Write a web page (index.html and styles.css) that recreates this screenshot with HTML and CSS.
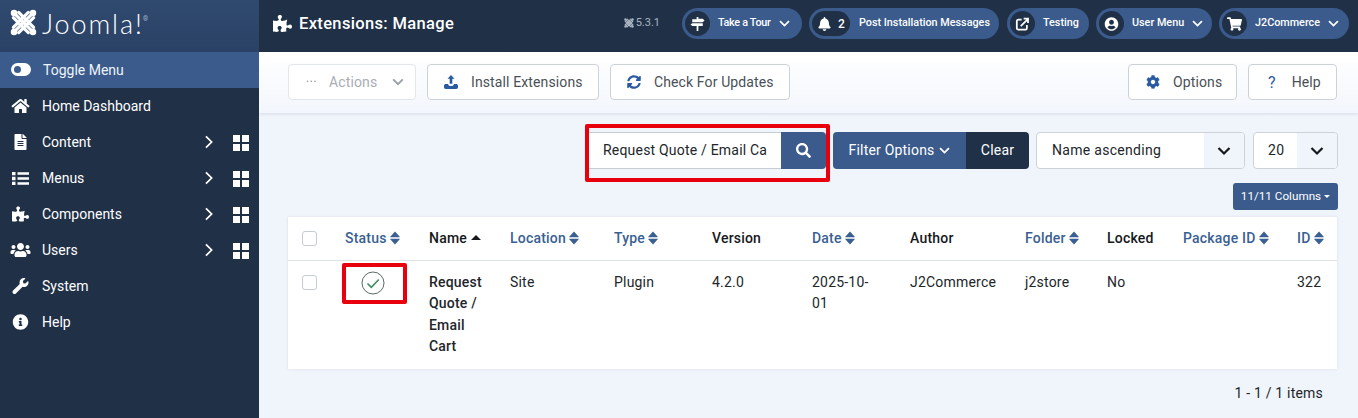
FILE: index.html
```html
<!DOCTYPE html>
<html lang="en">
<head>
    <meta charset="UTF-8">
    <meta name="viewport" content="width=device-width, initial-scale=1.0">
    <title>Extensions: Manage</title>
    <link rel="stylesheet" href="styles.css">
</head>
<body>
    <svg class="sprites" width="0" height="0" aria-hidden="true">
        <symbol id="i-puzzle" viewBox="0 0 576 512"><path d="M519.442 288.651c-41.519 0-59.5 31.593-82.058 31.593C377.409 320.244 432 144 432 144s-196.288 80-196.288-3.297c0-35.827 36.288-46.25 36.288-85.985C272 19.216 243.885 0 210.539 0c-34.654 0-66.366 18.891-66.366 56.346 0 41.364 31.711 59.277 31.711 81.75C175.885 207.719 0 166.758 0 166.758v333.237s178.635 41.047 178.635-28.662c0-22.473-40-40.107-40-81.471 0-37.456 29.25-56.346 63.577-56.346 33.673 0 61.788 19.216 61.788 54.717 0 39.735-36.288 50.158-36.288 85.985 0 60.803 129.675 25.73 181.23 25.73 0 0-34.725-120.101 25.827-120.101 35.962 0 46.423 36.152 86.308 36.152C556.712 416 576 387.99 576 354.443c0-34.199-18.962-65.792-56.558-65.792z"/></symbol>
        <symbol id="i-home" viewBox="0 0 576 512"><path d="M280.37 148.26L96 300.11V464a16 16 0 0 0 16 16l112.06-.29a16 16 0 0 0 15.92-16V368a16 16 0 0 1 16-16h64a16 16 0 0 1 16 16v95.64a16 16 0 0 0 16 16.05L464 480a16 16 0 0 0 16-16V300L295.67 148.26a12.19 12.19 0 0 0-15.3 0zM571.6 251.47L488 182.56V44.05a12 12 0 0 0-12-12h-56a12 12 0 0 0-12 12v72.61L318.47 43a48 48 0 0 0-61 0L4.34 251.47a12 12 0 0 0-1.6 16.9l25.5 31A12 12 0 0 0 45.15 301l235.22-193.74a12.19 12.19 0 0 1 15.3 0L530.9 301a12 12 0 0 0 16.9-1.6l25.5-31a12 12 0 0 0-1.7-16.93z"/></symbol>
        <symbol id="i-file" viewBox="0 0 384 512"><path d="M224 136V0H24C10.7 0 0 10.7 0 24v464c0 13.3 10.7 24 24 24h336c13.3 0 24-10.7 24-24V160H248c-13.2 0-24-10.8-24-24zm64 236c0 6.6-5.4 12-12 12H108c-6.6 0-12-5.4-12-12v-8c0-6.6 5.4-12 12-12h168c6.6 0 12 5.4 12 12v8zm0-64c0 6.6-5.4 12-12 12H108c-6.6 0-12-5.4-12-12v-8c0-6.6 5.4-12 12-12h168c6.6 0 12 5.4 12 12v8zm0-72v8c0 6.6-5.4 12-12 12H108c-6.6 0-12-5.4-12-12v-8c0-6.6 5.4-12 12-12h168c6.6 0 12 5.4 12 12zm96-114.1v6.1H256V0h6.1c6.4 0 12.5 2.5 17 7l97.9 98c4.5 4.5 7 10.6 7 16.9z"/></symbol>
        <symbol id="i-list" viewBox="0 0 17 13"><path d="M0 0h3.500v3.300H0zM0 4.850h3.500v3.300H0zM0 9.700h3.500V13H0zM5.500.3H17v2.500H5.500zM5.500 5.250H17v2.500H5.500zM5.500 10.200H17v2.500H5.500z"/></symbol>
        <symbol id="i-users" viewBox="0 0 640 512"><path d="M96 224c35.3 0 64-28.7 64-64s-28.7-64-64-64-64 28.7-64 64 28.7 64 64 64zm448 0c35.3 0 64-28.7 64-64s-28.7-64-64-64-64 28.7-64 64 28.7 64 64 64zm32 32h-64c-17.6 0-33.5 7.1-45.1 18.6 40.3 22.1 68.9 62 75.1 109.4h66c17.7 0 32-14.3 32-32v-32c0-35.3-28.7-64-64-64zm-256 0c61.9 0 112-50.1 112-112S381.9 32 320 32 208 82.1 208 144s50.1 112 112 112zm76.8 32h-8.3c-20.8 10-43.9 16-68.5 16s-47.6-6-68.5-16h-8.3C179.6 288 128 339.6 128 403.2V432c0 26.5 21.5 48 48 48h288c26.5 0 48-21.5 48-48v-28.8c0-63.6-51.6-115.2-115.2-115.2zm-223.7-13.4C161.5 263.1 145.6 256 128 256H64c-35.3 0-64 28.7-64 64v32c0 17.7 14.3 32 32 32h65.9c6.3-47.4 34.9-87.3 75.2-109.4z"/></symbol>
        <symbol id="i-wrench" viewBox="0 0 512 512"><path d="M507.73 109.1c-2.24-9.03-13.54-12.09-20.12-5.51l-74.36 74.36-67.88-11.31-11.31-67.88 74.36-74.36c6.62-6.62 3.43-17.9-5.66-20.16-47.38-11.74-99.55.91-136.58 37.93-39.64 39.64-50.55 97.1-34.05 147.2L18.74 402.76c-24.99 24.99-24.99 65.51 0 90.5 24.99 24.99 65.51 24.99 90.5 0l213.21-213.21c50.12 16.71 107.47 5.68 147.37-34.22 37.07-37.07 49.7-89.32 37.91-136.73z"/></symbol>
        <symbol id="i-info" viewBox="0 0 512 512"><path d="M256 8C119.043 8 8 119.083 8 256c0 136.997 111.043 248 248 248s248-111.003 248-248C504 119.083 392.957 8 256 8zm0 110c23.196 0 42 18.804 42 42s-18.804 42-42 42-42-18.804-42-42 18.804-42 42-42zm56 254c0 6.627-5.373 12-12 12h-88c-6.627 0-12-5.373-12-12v-24c0-6.627 5.373-12 12-12h12v-64h-12c-6.627 0-12-5.373-12-12v-24c0-6.627 5.373-12 12-12h64c6.627 0 12 5.373 12 12v100h12c6.627 0 12 5.373 12 12v24z"/></symbol>
        <symbol id="i-grid" viewBox="0 0 16 16"><path d="M0 0h7v7H0zM9 0h7v7H9zM0 9h7v7H0zM9 9h7v7H9z"/></symbol>
        <symbol id="i-bell" viewBox="0 0 448 512"><path d="M224 512c35.32 0 63.97-28.65 63.97-64H160.03c0 35.35 28.65 64 63.97 64zm215.39-149.71c-19.32-20.76-55.47-51.99-55.47-154.29 0-77.7-54.48-139.9-127.94-155.16V32c0-17.67-14.32-32-31.98-32s-31.98 14.33-31.98 32v20.84C118.56 68.1 64.08 130.3 64.08 208c0 102.3-36.15 133.53-55.47 154.29-6 6.45-8.66 14.16-8.61 21.71.11 16.4 12.98 32 32.1 32h383.8c19.12 0 32-15.6 32.1-32 .05-7.55-2.61-15.27-8.61-21.71z"/></symbol>
        <symbol id="i-sign" viewBox="0 0 16 16"><path d="M7 0h2v2h5l2 2-2 2H2V2.600h5zM2 7h12v3.400H9V16H7v-5.600H2L0 8.700z"/></symbol>
        <symbol id="i-external" viewBox="0 0 16 16"><path d="M7 3H3.200A1.700 1.700 0 0 0 1.500 4.700v8.100a1.700 1.700 0 0 0 1.700 1.700h8.100a1.700 1.700 0 0 0 1.700-1.700V9" fill="none" stroke="currentColor" stroke-width="2"/><path d="M6 10.500 13.500 3M9.300 1.800h5v5" fill="none" stroke="currentColor" stroke-width="2"/></symbol>
        <symbol id="i-user" viewBox="0 0 496 512"><path d="M248 8C111 8 0 119 0 256s111 248 248 248 248-111 248-248S385 8 248 8zm0 96c48.6 0 88 39.4 88 88s-39.4 88-88 88-88-39.4-88-88 39.4-88 88-88zm0 344c-58.7 0-111.3-26.6-146.5-68.2 18.8-35.4 55.6-59.8 98.5-59.8 2.4 0 4.8.4 7.1 1.1 13 4.2 26.6 6.9 40.9 6.9 14.3 0 28-2.7 40.9-6.9 2.3-.7 4.7-1.1 7.1-1.1 42.9 0 79.7 24.4 98.5 59.8C359.3 421.4 306.7 448 248 448z"/></symbol>
        <symbol id="i-cart" viewBox="0 0 576 512"><path d="M528.12 301.319l47.273-208C578.806 78.301 567.391 64 551.99 64H159.208l-9.166-44.81C147.758 8.021 137.93 0 126.529 0H24C10.745 0 0 10.745 0 24v16c0 13.255 10.745 24 24 24h69.883l70.248 343.435C147.325 417.1 136 435.222 136 456c0 30.928 25.072 56 56 56s56-25.072 56-56c0-15.674-6.447-29.835-16.824-40h209.647C430.447 426.165 424 440.326 424 456c0 30.928 25.072 56 56 56s56-25.072 56-56c0-22.172-12.888-41.332-31.579-50.405l5.517-24.276c3.413-15.018-8.002-29.319-23.403-29.319H218.117l-6.545-32h293.145c11.206 0 20.92-7.754 23.403-18.681z"/></symbol>
        <symbol id="i-cog" viewBox="0 0 512 512"><path d="M487.4 315.7l-42.6-24.6c4.3-23.2 4.3-47 0-70.2l42.6-24.6c4.9-2.8 7.1-8.6 5.5-14-11.1-35.6-30-67.8-54.7-94.6-3.8-4.1-10-5.1-14.8-2.3L380.8 110c-17.9-15.4-38.5-27.3-60.8-35.1V25.8c0-5.6-3.9-10.5-9.4-11.7-36.7-8.2-74.3-7.8-109.2 0-5.5 1.2-9.4 6.1-9.4 11.7V75c-22.2 7.9-42.8 19.8-60.8 35.1L88.7 85.5c-4.9-2.8-11-1.9-14.8 2.3-24.7 26.7-43.6 58.9-54.7 94.6-1.7 5.4.6 11.2 5.5 14L67.3 221c-4.3 23.2-4.3 47 0 70.2l-42.6 24.6c-4.9 2.8-7.1 8.6-5.5 14 11.1 35.6 30 67.8 54.7 94.6 3.8 4.1 10 5.1 14.8 2.3l42.6-24.6c17.9 15.4 38.5 27.3 60.8 35.1v49.2c0 5.6 3.9 10.5 9.4 11.7 36.7 8.2 74.3 7.8 109.2 0 5.5-1.2 9.4-6.1 9.4-11.7v-49.2c22.2-7.9 42.8-19.8 60.8-35.1l42.6 24.6c4.9 2.8 11 1.9 14.8-2.3 24.7-26.7 43.6-58.9 54.7-94.6 1.5-5.5-.7-11.3-5.6-14.1zM256 336c-44.1 0-80-35.9-80-80s35.9-80 80-80 80 35.9 80 80-35.9 80-80 80z"/></symbol>
        <symbol id="i-sync" viewBox="0 0 512 512"><path d="M370.72 133.28C339.458 104.008 298.888 87.962 255.848 88c-77.458.068-144.328 53.178-162.791 126.85-1.344 5.363-6.122 9.15-11.651 9.15H24.103c-7.498 0-13.194-6.807-11.807-14.176C33.933 94.924 134.813 8 256 8c66.448 0 126.791 26.136 171.315 68.685L463.03 40.97C478.149 25.851 504 36.559 504 57.941V192c0 13.255-10.745 24-24 24H345.941c-21.382 0-32.09-25.851-16.971-40.971l41.75-41.749zM32 296h134.059c21.382 0 32.09 25.851 16.971 40.971l-41.75 41.75c31.262 29.273 71.835 45.319 114.876 45.28 77.418-.07 144.315-53.144 162.787-126.849 1.344-5.363 6.122-9.15 11.651-9.15h57.304c7.498 0 13.194 6.807 11.807 14.176C478.067 417.076 377.187 504 256 504c-66.448 0-126.791-26.136-171.315-68.685L48.97 471.03C33.851 486.149 8 475.441 8 454.059V320c0-13.255 10.745-24 24-24z"/></symbol>
        <symbol id="i-search" viewBox="0 0 512 512"><path d="M505 442.7L405.3 343c-4.5-4.5-10.6-7-17-7H372c27.6-35.3 44-79.7 44-128C416 93.1 322.9 0 208 0S0 93.1 0 208s93.1 208 208 208c48.3 0 92.7-16.4 128-44v16.3c0 6.4 2.5 12.5 7 17l99.7 99.7c9.4 9.4 24.6 9.4 33.9 0l28.3-28.3c9.400-9.400 9.400-24.600.1-34zM208 336c-70.7 0-128-57.200-128-128 0-70.700 57.200-128 128-128 70.700 0 128 57.200 128 128 0 70.700-57.200 128-128 128z"/></symbol>
        <symbol id="i-upload" viewBox="0 0 16 16"><path d="M8 0l4 4.300H9.500V10h-3V4.300H4zM0 12.300C0 11 1 10.300 2 10.300h2.500c.3 1.500 1.700 2.300 3.500 2.300s3.200-.8 3.500-2.300H14c1 0 2 .7 2 2V14c0 1.100-.9 2-2 2H2c-1.100 0-2-.9-2-2z"/></symbol>
        <symbol id="i-chevron" viewBox="0 0 16 16"><path d="M2.500 5l5.500 5.500L13.500 5" fill="none" stroke="currentColor" stroke-width="2.200"/></symbol>
        <symbol id="i-right" viewBox="0 0 16 16"><path d="M4.500 1.500 11 8l-6.500 6.500" fill="none" stroke="currentColor" stroke-width="2"/></symbol>
        <symbol id="i-sort" viewBox="0 0 10 14"><path d="M5 .5 9.500 5.500C10 6 9.700 6.300 9.200 6.300H.8C.3 6.300 0 6 .5 5.500zM5 13.500.5 8.500C0 8 .3 7.700.8 7.700h8.400c.5 0 .8.300.3.800z"/></symbol>
        <symbol id="i-logo" viewBox="0 0 28 28">
            <g fill="none" stroke="currentColor" stroke-width="3.300" stroke-linecap="round">
                <path d="M4.500 4.500 11 11c2 2 5 5 7 7l5.500 5.500"/>
                <path d="M23.500 4.500 17 11c-2 2-5 5-7 7l-5.500 5.500"/>
                <path d="M9 3.500 16 10.500M19 3.500 12 10.500M9 24.500 16 17.500M19 24.500 12 17.500"/>
                <path d="M3.500 9 10 15.500M3.500 19 10 12.500M24.500 9 18 15.500M24.500 19 18 12.500"/>
            </g>
            <circle cx="4.200" cy="4.200" r="3.400" fill="currentColor"/>
            <circle cx="23.800" cy="4.200" r="3.400" fill="currentColor"/>
            <circle cx="4.200" cy="23.800" r="3.400" fill="currentColor"/>
            <circle cx="23.800" cy="23.800" r="3.400" fill="currentColor"/>
        </symbol>
    </svg>

    <div class="layout">
        <aside class="sidebar">
            <div class="brand">
                <svg class="brand-mark"><use href="#i-logo"/></svg>
                <span class="brand-name">Joomla!</span>
                <span class="brand-reg">®</span>
            </div>
            <nav class="side-nav">
                <a class="side-item toggle"><span class="switch"></span><span class="side-label">Toggle Menu</span></a>
                <a class="side-item"><svg class="side-icon home"><use href="#i-home"/></svg><span class="side-label">Home Dashboard</span></a>
                <a class="side-item"><svg class="side-icon"><use href="#i-file"/></svg><span class="side-label">Content</span><svg class="side-arrow"><use href="#i-right"/></svg><svg class="side-grid"><use href="#i-grid"/></svg></a>
                <a class="side-item"><svg class="side-icon list-icon"><use href="#i-list"/></svg><span class="side-label">Menus</span><svg class="side-arrow"><use href="#i-right"/></svg><svg class="side-grid"><use href="#i-grid"/></svg></a>
                <a class="side-item"><svg class="side-icon"><use href="#i-puzzle"/></svg><span class="side-label">Components</span><svg class="side-arrow"><use href="#i-right"/></svg><svg class="side-grid"><use href="#i-grid"/></svg></a>
                <a class="side-item"><svg class="side-icon wide"><use href="#i-users"/></svg><span class="side-label">Users</span><svg class="side-arrow"><use href="#i-right"/></svg><svg class="side-grid"><use href="#i-grid"/></svg></a>
                <a class="side-item"><svg class="side-icon"><use href="#i-wrench"/></svg><span class="side-label">System</span></a>
                <a class="side-item"><svg class="side-icon"><use href="#i-info"/></svg><span class="side-label">Help</span></a>
            </nav>
        </aside>

        <div class="page">
            <header class="topbar">
                <svg class="title-icon"><use href="#i-puzzle"/></svg>
                <h1>Extensions: Manage</h1>
                <span class="version"><svg class="version-icon"><use href="#i-logo"/></svg>5.3.1</span>
                <a class="pill tour"><span class="pill-icon"><svg><use href="#i-sign"/></svg></span><span class="pill-text">Take a Tour</span><svg class="pill-chevron"><use href="#i-chevron"/></svg></a>
                <a class="pill post"><span class="pill-icon bell"><svg><use href="#i-bell"/></svg><b>2</b></span><span class="pill-text">Post Installation Messages</span></a>
                <a class="pill testing"><span class="pill-icon"><svg><use href="#i-external"/></svg></span><span class="pill-text">Testing</span></a>
                <a class="pill usermenu"><span class="pill-icon"><svg><use href="#i-user"/></svg></span><span class="pill-text">User Menu</span><svg class="pill-chevron"><use href="#i-chevron"/></svg></a>
                <a class="pill j2"><span class="pill-icon"><svg><use href="#i-cart"/></svg></span><span class="pill-text">J2Commerce</span><svg class="pill-chevron"><use href="#i-chevron"/></svg></a>
            </header>

            <div class="toolbar">
                <button class="tool actions"><span class="dots">•••</span><span>Actions</span><svg class="tool-chevron"><use href="#i-chevron"/></svg></button>
                <button class="tool install"><svg><use href="#i-upload"/></svg><span>Install Extensions</span></button>
                <button class="tool updates"><svg><use href="#i-sync"/></svg><span>Check For Updates</span></button>
                <button class="tool options"><svg><use href="#i-cog"/></svg><span>Options</span></button>
                <button class="tool help"><span class="question">?</span><span>Help</span></button>
            </div>

            <main class="content">
                <div class="filters">
                    <div class="search">
                        <div class="search-input">Request Quote / Email Ca</div>
                        <button class="search-btn"><svg><use href="#i-search"/></svg></button>
                        <span class="mark mark-search"></span>
                    </div>
                    <div class="filter-group">
                        <button class="filter-btn">Filter Options<svg><use href="#i-chevron"/></svg></button>
                        <button class="clear-btn">Clear</button>
                    </div>
                    <div class="select sort-select"><span>Name ascending</span><i><svg><use href="#i-chevron"/></svg></i></div>
                    <div class="select limit-select"><span>20</span><i><svg><use href="#i-chevron"/></svg></i></div>
                </div>
                <div class="columns-row">
                    <button class="columns-btn">11/11 Columns<span class="caret"></span></button>
                </div>

                <table class="list">
                    <colgroup>
                        <col class="c-check"><col class="c-status"><col class="c-name"><col class="c-location">
                        <col class="c-type"><col class="c-version"><col class="c-date"><col class="c-author">
                        <col class="c-folder"><col class="c-locked"><col class="c-package"><col class="c-id">
                    </colgroup>
                    <thead>
                        <tr>
                            <th><span class="check"></span></th>
                            <th class="sortable">Status<svg><use href="#i-sort"/></svg></th>
                            <th class="name-head">Name<span class="sort-up"></span></th>
                            <th class="sortable">Location<svg><use href="#i-sort"/></svg></th>
                            <th class="sortable">Type<svg><use href="#i-sort"/></svg></th>
                            <th>Version</th>
                            <th class="sortable">Date<svg><use href="#i-sort"/></svg></th>
                            <th>Author</th>
                            <th class="sortable">Folder<svg><use href="#i-sort"/></svg></th>
                            <th>Locked</th>
                            <th class="sortable">Package ID<svg><use href="#i-sort"/></svg></th>
                            <th class="sortable">ID<svg><use href="#i-sort"/></svg></th>
                        </tr>
                    </thead>
                    <tbody>
                        <tr>
                            <td><span class="check"></span></td>
                            <td class="status-cell">
                                <svg class="status-ok" viewBox="0 0 24 24"><circle cx="12" cy="12" r="11" fill="none" stroke="#5b6b66" stroke-width="1"/><path d="M6.500 12.500l3.800 3.800 7.500-7.800" fill="none" stroke="#3f8a5f" stroke-width="1.600"/></svg>
                                <span class="mark mark-status"></span>
                            </td>
                            <td class="name-cell">Request Quote / Email Cart</td>
                            <td>Site</td>
                            <td>Plugin</td>
                            <td>4.2.0</td>
                            <td>2025-10-<br>01</td>
                            <td>J2Commerce</td>
                            <td>j2store</td>
                            <td>No</td>
                            <td></td>
                            <td>322</td>
                        </tr>
                    </tbody>
                </table>
                <div class="pager">1 - 1 / 1 items</div>
            </main>
        </div>
    </div>
</body>
</html>
```

FILE: styles.css
```css
* {
    box-sizing: border-box;
}
body {
    margin: 0;
    font-family: Roboto, "Liberation Sans", Arial, sans-serif;
    font-size: 14px;
    color: #22262a;
    background-color: #f0f4fb;
    overflow: hidden;
}
button {
    font-family: inherit;
}
.sprites {
    position: absolute;
}
.layout {
    display: flex;
    height: 418px;
}

/* sidebar */
.sidebar {
    width: 259px;
    flex: none;
    background-color: #1f3047;
    color: #fff;
}
.brand {
    height: 52px;
    display: flex;
    align-items: flex-start;
    padding: 9px 0 0 10px;
    background: linear-gradient(#30496f, #2a4265);
}
.brand-mark {
    width: 27px;
    height: 27px;
    fill: #fff;
    color: #fff;
}
.brand-name {
    font-family: Lato, sans-serif;
    font-weight: 300;
    font-size: 27px;
    line-height: 27px;
    margin: 1px 0 0 5px;
    letter-spacing: 1.900px;
}
.brand-reg {
    font-size: 7px;
    line-height: 10px;
    margin: 5px 0 0 -1px;
    color: #9fb4d0;
}
.side-item {
    height: 36px;
    display: flex;
    align-items: center;
    position: relative;
    padding-left: 42px;
    font-size: 14px;
    color: #fff;
}
.side-item.toggle {
    background-color: #3a5b8b;
    padding-left: 43px;
    color: #eef3fa;
}
.switch {
    position: absolute;
    left: 11px;
    top: 11px;
    width: 20px;
    height: 13px;
    border-radius: 7px;
    background-color: #fff;
}
.switch::after {
    content: "";
    position: absolute;
    left: 3px;
    top: 3px;
    width: 7px;
    height: 7px;
    border-radius: 50%;
    background-color: #3a5b8b;
}
.side-icon {
    position: absolute;
    left: 12px;
    top: 10px;
    width: 17px;
    height: 16px;
    fill: #fff;
}
.side-icon.home {
    left: 11px;
    width: 19px;
}
.side-icon.wide {
    left: 10px;
    width: 21px;
}
.side-icon.list-icon {
    top: 12px;
    height: 13px;
}
.side-arrow {
    position: absolute;
    left: 202px;
    top: 11px;
    width: 14px;
    height: 14px;
    color: #fff;
}
.side-grid {
    position: absolute;
    left: 233px;
    top: 11px;
    width: 16px;
    height: 16px;
    fill: #fff;
}

/* top bar */
.page {
    flex: 1;
    min-width: 0;
}
.topbar {
    height: 52px;
    display: flex;
    align-items: center;
    background-color: #1f3047;
    color: #fff;
    padding: 0 9px 5px 14px;
}
.title-icon {
    width: 19px;
    height: 17px;
    fill: #fff;
    margin: 0 7px 0 0;
}
.topbar h1 {
    margin: 0 0 1px;
    font-size: 16.500px;
    font-weight: 500;
    letter-spacing: 0.35px;
}
.version {
    margin-left: auto;
    margin-right: 22px;
    display: flex;
    align-items: center;
    gap: 2px;
    font-size: 11px;
    color: #a9b4c2;
    padding-bottom: 2px;
}
.version-icon {
    width: 10px;
    height: 10px;
    color: #a9b4c2;
}
.pill {
    height: 31px;
    margin-left: 7px;
    display: flex;
    align-items: center;
    border-radius: 16px;
    background-color: #3a5b8b;
    font-size: 10.800px;
    font-weight: 500;
    padding-left: 3px;
}
.pill-icon {
    width: 25px;
    height: 25px;
    flex: none;
    border-radius: 13px;
    background-color: #1f3047;
    display: flex;
    align-items: center;
    justify-content: center;
}
.pill-icon svg {
    width: 15px;
    height: 14px;
    fill: #fff;
    color: #fff;
}
.pill-icon.bell {
    width: 38px;
    gap: 7px;
    justify-content: flex-start;
    padding-left: 6px;
}
.pill-icon.bell svg {
    width: 13px;
}
.pill-icon.bell b {
    font-weight: 500;
    font-size: 12px;
}
.pill-text {
    margin: 0 0 3px 8px;
}
.pill-chevron {
    width: 13px;
    height: 13px;
    margin-left: 7px;
    color: #fff;
}
.tour {
    width: 120px;
    margin-left: 0;
}
.tour .pill-text {
    letter-spacing: -0.3px;
    margin-left: 8px;
}
.tour .pill-chevron {
    margin-left: 8px;
}
.post { width: 190px; }
.post .pill-text { margin-left: 9px; }
.testing {
    width: 82px;
    margin-left: 8px;
}
.usermenu { width: 116px; }
.j2 { width: 130px; }

/* toolbar */
.toolbar {
    height: 61px;
    display: flex;
    align-items: center;
    gap: 11px;
    padding: 0 21px 1px 29px;
    background: linear-gradient(#fff, #f3f6fc);
    box-shadow: 0 1px 3px rgba(30, 50, 80, 0.12);
}
.tool {
    height: 36px;
    display: flex;
    align-items: center;
    background-color: #fff;
    border: 1px solid #cdd2d9;
    border-radius: 4px;
    color: #495057;
    font-size: 14px;
    letter-spacing: 0.12px;
    padding: 0;
}
.tool svg {
    width: 14px;
    height: 14px;
    fill: #2a5aa0;
}
.actions {
    width: 128px;
    padding-left: 17px;
    color: #a8adb3;
    border-color: #e3e6ea;
}
.dots {
    width: 12px;
    font-size: 7px;
    letter-spacing: 1.400px;
    margin-right: 11px;
    color: #8d9298;
    white-space: nowrap;
}
.actions .tool-chevron {
    color: #9aa0a7;
    margin-left: 14px;
}
.install {
    width: 172px;
    padding-left: 16px;
}
.updates {
    width: 180px;
    padding-left: 16px;
}
.install span,
.updates span,
.options span {
    margin-left: 13px;
}
.options {
    width: 109px;
    margin-left: auto;
    padding-left: 17px;
}
.help {
    width: 89px;
    padding-left: 19px;
}
.question {
    color: #2a5aa0;
    font-size: 16px;
    margin-right: 16px;
}

/* filters */
.content {
    padding: 0 20px 0 29px;
}
.filters {
    display: flex;
    justify-content: flex-end;
    padding-top: 19px;
}
.search {
    display: flex;
    position: relative;
    height: 37px;
}
.search-input {
    width: 192px;
    background-color: #fff;
    border-top: 1px solid #c6ccd4;
    border-bottom: 1px solid #c6ccd4;
    padding-left: 14px;
    line-height: 34px;
    letter-spacing: 0.2px;
    white-space: nowrap;
    overflow: hidden;
}
.search-btn {
    width: 45px;
    border: 0;
    background-color: #3a5b8b;
    border-radius: 0 4px 4px 0;
    display: flex;
    align-items: center;
    justify-content: center;
}
.search-btn svg {
    width: 15px;
    height: 15px;
    fill: #fff;
}
.mark {
    position: absolute;
    border: 4px solid #e8000d;
    border-radius: 2px;
    pointer-events: none;
}
.mark-search {
    left: -4px;
    top: -8px;
    width: 245px;
    height: 58px;
}
.filter-group {
    display: flex;
    margin-left: 7px;
}
.filter-btn,
.clear-btn {
    height: 37px;
    border: 0;
    color: #fff;
    font-size: 14px;
    letter-spacing: 0.2px;
    padding: 0 0 2px;
}
.filter-btn {
    width: 133px;
    background-color: #3a5b8b;
    border-radius: 4px 0 0 4px;
}
.filter-btn svg {
    width: 13px;
    height: 13px;
    margin-left: 3px;
    vertical-align: -2px;
    color: #fff;
}
.clear-btn {
    width: 63px;
    background-color: #1f3047;
    border-radius: 0 4px 4px 0;
}
.select {
    height: 37px;
    display: flex;
    align-items: center;
    background-color: #fff;
    border: 1px solid #cdd2d9;
    border-radius: 4px;
    letter-spacing: 0.3px;
    overflow: hidden;
}
.select span {
    flex: 1;
    padding-bottom: 2px;
}
.select i {
    width: 40px;
    height: 100%;
    background-color: #f0f4fb;
    display: flex;
    align-items: center;
    justify-content: center;
}
.select svg {
    width: 16px;
    height: 16px;
    color: #16191c;
}
.sort-select {
    width: 209px;
    margin-left: 7px;
    padding-left: 15px;
}
.limit-select {
    width: 85px;
    margin-left: 8px;
    padding-left: 14px;
}
.columns-row {
    display: flex;
    justify-content: flex-end;
    margin-top: 14px;
}
.columns-btn {
    width: 105px;
    height: 27px;
    border: 0;
    border-radius: 3px;
    background-color: #3a5b8b;
    color: #fff;
    font-size: 11.700px;
    padding: 0 0 2px;
}
.caret {
    display: inline-block;
    margin-left: 3px;
    vertical-align: 2px;
    border-top: 3px solid #fff;
    border-left: 3px solid transparent;
    border-right: 3px solid transparent;
}

/* table */
.list {
    width: 1049px;
    margin-top: 7px;
    table-layout: fixed;
    border-collapse: collapse;
    background-color: #fff;
    box-shadow: 0 0 3px rgba(30, 50, 80, 0.1);
}
.c-check { width: 43px; }
.c-status { width: 83px; }
.c-name { width: 82px; }
.c-location { width: 104px; }
.c-type { width: 98px; }
.c-version { width: 100px; }
.c-date { width: 98px; }
.c-author { width: 115px; }
.c-folder { width: 82px; }
.c-locked { width: 76px; }
.c-package { width: 114px; }
.c-id { width: 54px; }
.list th,
.list td {
    padding: 0 14px;
    text-align: left;
    vertical-align: top;
}
.list th {
    height: 43px;
    padding-top: 13px;
    font-weight: 500;
    color: #16191c;
    letter-spacing: 0.2px;
    white-space: nowrap;
    border-bottom: 1px solid #dfe3e7;
}
.list th.sortable {
    color: #3a5f92;
}
.list th svg {
    width: 10px;
    height: 14px;
    fill: #3a5f92;
    margin-left: 3px;
    vertical-align: -2px;
}
.list td {
    height: 109px;
    padding-top: 11px;
    line-height: 21.600px;
    letter-spacing: 0.2px;
}
.list th:first-child,
.list td:first-child {
    padding-left: 14px;
    padding-right: 0;
}
.check {
    display: block;
    width: 15px;
    height: 15px;
    background-color: #fff;
    border: 1px solid #c6ccd2;
    border-radius: 3px;
}
.list td .check {
    margin-top: 3px;
}
.list th .check {
    margin-top: 1px;
}
.sort-up {
    display: inline-block;
    margin-left: 4px;
    vertical-align: 3px;
    border-bottom: 5px solid #16191c;
    border-left: 5px solid transparent;
    border-right: 5px solid transparent;
}
.status-cell {
    position: relative;
}
.status-ok {
    display: block;
    width: 24px;
    height: 24px;
    margin-left: 16px;
    margin-top: -1px;
}
.list .name-head,
.list .name-cell {
    padding-left: 15px;
    padding-right: 13px;
}
.name-cell {
    font-weight: 500;
}
.mark-status {
    left: 11px;
    top: 2px;
    width: 65px;
    height: 41px;
}
.pager {
    text-align: right;
    padding: 16px 15px 0 0;
    letter-spacing: 0.2px;
}
```
